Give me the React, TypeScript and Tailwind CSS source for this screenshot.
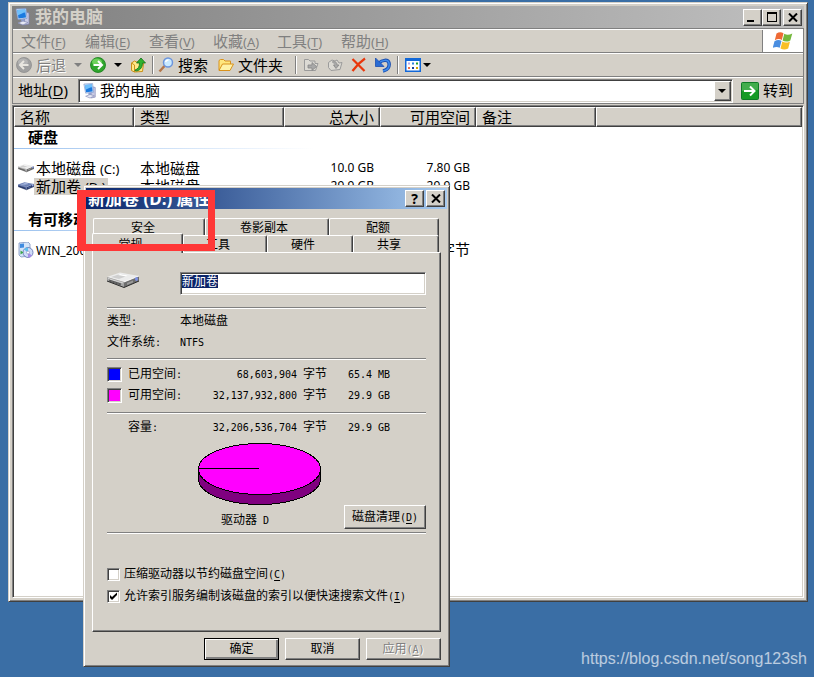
import { useEffect, useRef, type ReactNode } from 'react'
import clsx from 'clsx'

const raised = 'bg-[#d4d0c8] border border-t-white border-l-white border-r-[#404040] border-b-[#404040] shadow-[inset_-1px_-1px_0_#808080]'
const sunken = 'border border-t-[#808080] border-l-[#808080] border-r-white border-b-white shadow-[inset_1px_1px_0_#404040,inset_-1px_-1px_0_#d4d0c8]'
const frame = 'bg-[#d4d0c8] border border-t-[#d4d0c8] border-l-[#d4d0c8] border-r-[#404040] border-b-[#404040] shadow-[inset_1px_1px_0_#fff,inset_-1px_-1px_0_#808080]'
const band = 'border-t border-b border-t-white border-b-[#808080]'

const menus = [
  { label: '文件', hotkey: 'F' },
  { label: '编辑', hotkey: 'E' },
  { label: '查看', hotkey: 'V' },
  { label: '收藏', hotkey: 'A' },
  { label: '工具', hotkey: 'T' },
  { label: '帮助', hotkey: 'H' },
]

function Key({ children, className }: { children: string; className?: string }) {
  return (
    <span className={className}>
      (<u className="underline-offset-2">{children}</u>)
    </span>
  )
}

// Half-width characters of the dialog font
function Half({ children }: { children: ReactNode }) {
  return <span className="font-['DejaVu_Sans_Mono',monospace] text-[10px] whitespace-pre">{children}</span>
}

function ComputerIcon({ className }: { className?: string }) {
  return (
    <svg viewBox="0 0 16 18" className={className} aria-hidden="true">
      <path d="M10 4l4 1v11l-5 1z" fill="#c9cbe4" stroke="#7b80b0" strokeWidth=".7" />
      <path d="M1 1l10-.5 1 10-9 1z" fill="#d8e8fa" stroke="#7a92c8" strokeWidth=".7" />
      <path d="M2.200 2l8-.4.8 8-7.500.8z" fill="#1b7ae0" />
      <path d="M2.200 2l8-.4.3 3c-3 0-5 2-7.700 3z" fill="#6fc0fb" />
      <path d="M6 11l3-.4.5 3-3 .4z" fill="#8fa0d0" />
      <path d="M3 15l5-2 5 1.500-5 2.500z" fill="#e6e8f4" stroke="#8289b4" strokeWidth=".7" />
    </svg>
  )
}

function DriveIcon({ className, dark }: { className?: string; dark?: boolean }) {
  const top = dark ? '#6a7fb4' : '#ececec'
  const side = dark ? '#2b3d72' : '#6e6e6e'
  const front = dark ? '#42568f' : '#a4a4a4'
  return (
    <svg viewBox="0 0 32 16" className={className} aria-hidden="true">
      <path d="M17 10l15-6v5L17 15.500z" fill={side} />
      <path d="M0 5L13 .5 32 4 17 10z" fill={top} />
      <path d="M0 5l17 5v5.500L0 9z" fill={front} />
      <path d="M4 5l9-3 8 1.500-9 3.500z" fill={dark ? '#93a5d0' : '#cfcfcf'} />
      <path d="M13 2l8 1.500-2 1-8-1.500z" fill={dark ? '#b4c1e4' : '#fff'} />
      <path d="M1 6.500l15 4.500" stroke={dark ? '#8a9ccc' : '#e2e2e2'} strokeWidth=".8" fill="none" />
      <path d="M2 8l12 4M2 9l12 4" stroke={dark ? '#1c2c58' : '#484848'} strokeWidth=".8" fill="none" />
      <path d="M17 10l15-6" stroke={dark ? '#a9b6da' : '#fff'} strokeWidth=".8" />
      <path d="M20 11l6-2.500v2L20 13z" fill={dark ? '#5168a4' : '#9a9a9a'} />
      <ellipse cx="29.500" cy="7" rx="1.500" ry="2" fill={dark ? '#9fb3ec' : '#7f92e6'} />
      <path d="M0 9l17 6.500L32 9" stroke={dark ? '#14224a' : '#2c2c2c'} strokeWidth="1" fill="none" />
    </svg>
  )
}

function DiscIcon() {
  return (
    <svg viewBox="0 0 16 16" className="w-4 h-4" aria-hidden="true">
      <path d="M1 1l9-1 2 2v12l-9 1-2-2z" fill="#d4e4f8" stroke="#7d93c0" strokeWidth=".8" />
      <path d="M2 2l4-.5v4L2 6z" fill="#3f8be0" />
      <circle cx="10" cy="10.500" r="5" fill="#cfdcf8" stroke="#5b6fb0" strokeWidth=".8" />
      <path d="M10 10.500L6 7.500a5 5 0 0 1 4-2z" fill="#5fc0ee" />
      <path d="M10 10.500l4 3a5 5 0 0 1-4 2z" fill="#a68be8" />
      <circle cx="10" cy="10.500" r="1.500" fill="#fff" stroke="#7d88b8" strokeWidth=".6" />
      <path d="M2.500 8.500l3 2-3 2z" fill="#3aa54a" />
    </svg>
  )
}

function RoundArrow({ back }: { back?: boolean }) {
  return (
    <svg viewBox="0 0 16 16" className="w-4 h-4 shrink-0" aria-hidden="true">
      <circle cx="8" cy="8" r="7.500" fill={back ? '#a0a0a0' : '#2fa52c'} stroke={back ? '#8e8e8e' : '#187d1b'} strokeWidth=".8" />
      <ellipse cx="7" cy="5" rx="5" ry="3.500" fill={back ? '#b4b4b4' : '#6dd25b'} />
      <path
        d={back ? 'M12.500 8H4.500M8 4L4 8l4 4' : 'M3.500 8h8M8 4l4 4-4 4'}
        stroke={back ? '#e8e6e0' : '#fff'}
        strokeWidth="2"
        fill="none"
      />
    </svg>
  )
}

function FolderIcon() {
  return (
    <svg viewBox="0 0 16 16" className="w-4 h-4 shrink-0" aria-hidden="true">
      <path d="M1 13V3.500L2.500 2.500h3L7 4h5.500v3" fill="#ffe77e" stroke="#d9921c" />
      <path d="M1 13.500L4.500 7H15.500L12 13.500z" fill="#fff3a8" stroke="#d9921c" />
    </svg>
  )
}

function FolderUpIcon() {
  return (
    <svg viewBox="0 0 16 16" className="w-4 h-4 shrink-0" aria-hidden="true">
      <path d="M1.500 6l3-2 2 1 5-1.500 2 3-1 8-8 .5-3-1.500z" fill="#ffe98a" stroke="#c99018" />
      <path d="M1.500 6l3 2v7" fill="none" stroke="#c99018" />
      <path d="M5 13c3-1 4.500-3 4.500-7H6.500L11 1l4.500 5H12.500c0 5-3 8-7 8z" fill="#2fb22f" stroke="#11701a" strokeWidth=".8" />
    </svg>
  )
}

function SearchIcon() {
  return (
    <svg viewBox="0 0 16 16" className="w-4 h-4 shrink-0" aria-hidden="true">
      <path d="M1.500 14.500L6.500 9" stroke="#b4764a" strokeWidth="2.500" />
      <circle cx="10" cy="5.500" r="4.500" fill="#c9e9ff" stroke="#6d95dc" strokeWidth="1.500" />
      <path d="M7.500 5a3 3 0 0 1 3-2" stroke="#fff" strokeWidth="1.500" fill="none" />
    </svg>
  )
}

function MoveIcon({ copy }: { copy?: boolean }) {
  return (
    <svg viewBox="0 0 16 16" className="w-4 h-4 shrink-0" aria-hidden="true">
      {copy ? (
        <path d="M1.500 5.500L5 3l3 1 2-1 2 3 3-.5-2 7-9 1-2.500-3z" fill="#dcdad4" stroke="#9b9b9b" />
      ) : (
        <path d="M1.500 13.500v-11h4L7 4h5v2.500h3l-2.500 7z" fill="#dcdad4" stroke="#9b9b9b" />
      )}
      <path d={copy ? 'M5 5c3-1 5 0 5 3h2L9 11.500 6.500 8H8' : 'M5 8h4V5.500L13.500 9.500 9 13.500V11H5z'} fill="#a8a8a8" stroke="#878787" strokeWidth=".8" />
    </svg>
  )
}

function DeleteIcon() {
  return (
    <svg viewBox="0 0 16 16" className="w-4 h-4 shrink-0" aria-hidden="true">
      <path d="M1.500 2l12 12M14 1.500C9 5 5 9 1.500 14" stroke="#e9370b" strokeWidth="2.200" fill="none" />
    </svg>
  )
}

function UndoIcon() {
  return (
    <svg viewBox="0 0 16 16" className="w-4 h-4 shrink-0" aria-hidden="true">
      <path d="M4 6c3-3 9-4 10 0 .8 4-1.500 7-6 8" stroke="#1b4fb0" strokeWidth="3.500" fill="none" />
      <path d="M4 6c3-3 9-4 10 0 .8 4-1.500 7-6 8" stroke="#3e8cec" strokeWidth="1.500" fill="none" />
      <path d="M.5 1v8.500H9L6.500 7 4 4.500z" fill="#2a6cd4" stroke="#1b4fb0" strokeWidth=".8" />
    </svg>
  )
}

function ViewsIcon() {
  return (
    <svg viewBox="0 0 16 16" className="w-4 h-4 shrink-0" aria-hidden="true">
      <path d="M0 1h16v14H0z" fill="#1268d8" />
      <path d="M1.500 4h13v9.500h-13z" fill="#fff" />
      <path d="M3 5.500h2v2H3z" fill="#b5a7e8" />
      <path d="M7 5.500h2v2H7z" fill="#2c83e0" />
      <path d="M11 5.500h2v2h-2z" fill="#1c9f2c" />
      <path d="M3 10h2v2H3z" fill="#ef7048" />
      <path d="M7 10h2v2H7z" fill="#173d9a" />
      <path d="M11 10h2v2h-2z" fill="#d9a400" />
    </svg>
  )
}

function Caret({ gray }: { gray?: boolean }) {
  return (
    <svg viewBox="0 0 8 4" className="w-2 h-1 shrink-0" aria-hidden="true">
      <path d="M0 0h8L4 4z" fill={gray ? '#808080' : '#000'} />
    </svg>
  )
}

function FlagIcon() {
  return (
    <svg viewBox="0 0 20 20" className="w-5 h-5" aria-hidden="true">
      <path d="M3.500 2.500c2.500-1.800 5-1.600 7-.3L8.800 9C7 7.800 4.500 7.700 1.800 9.200z" fill="#ee6a35" />
      <path d="M11.300 2.800c2.500 1.400 5 1.200 8-.4l-2 7c-2.700 1.500-5.500 1.600-7.700.1z" fill="#74b83c" />
      <path d="M1.500 10.200c2.700-1.500 5.200-1.400 7-.2l-1.800 6.800c-2-1.200-4.400-1.200-7 .2z" fill="#4a8ee0" />
      <path d="M9.300 10.600c2.300 1.400 5 1.300 7.700-.2l-1.800 7c-2.700 1.400-5.300 1.400-7.700 0z" fill="#f8bf26" />
    </svg>
  )
}

function CloseGlyph() {
  return (
    <svg viewBox="0 0 10 9" className="w-[10px] h-[9px]" aria-hidden="true">
      <path d="M1 .5l8 8M9 .5l-8 8" stroke="#000" strokeWidth="2" />
    </svg>
  )
}

function TitleButton({ label, children, className }: { label: string; children: ReactNode; className?: string }) {
  return (
    <button aria-label={label} className={clsx(raised, 'w-[19px] h-[17px] flex items-center justify-center shrink-0', className)}>
      {children}
    </button>
  )
}

function ToolSeparator() {
  return <div className="w-0.5 h-[18px] border-l border-l-[#808080] border-r border-r-white shrink-0" />
}

function GroupRow({ name, first }: { name: string; first?: boolean }) {
  return (
    <tr>
      <th colSpan={6} className={clsx('p-0 pb-[10px] text-left font-bold', !first && 'pt-[14px]')}>
        <div className="h-[21px] pl-[14px] leading-5 text-[15px]">{name}</div>
        <div className="h-px w-[300px] bg-linear-to-r from-[#9cc2ee] to-white" />
      </th>
    </tr>
  )
}

type DriveRowProps = { icon: ReactNode; name: ReactNode; type: ReactNode; size?: ReactNode; free: ReactNode; selected?: boolean }

function DriveRow({ icon, name, type, size, free, selected }: DriveRowProps) {
  return (
    <tr className="h-[18px] leading-4">
      <td className="p-0 pl-1">
        <div className="h-4 flex items-center">
          <span className="w-4 shrink-0">{icon}</span>
          <span className={clsx('px-0.5 whitespace-nowrap', selected && 'bg-[#d4d0c8]')}>{name}</span>
        </div>
      </td>
      <td className="p-0 pl-1.5">{type}</td>
      <td className="p-0 pr-1.5 text-right text-xs leading-4">{size}</td>
      <td className="p-0 pr-1.5 text-right text-xs leading-4">{free}</td>
      <td />
      <td />
    </tr>
  )
}

function Explorer() {
  const head = clsx(raised, 'h-5 px-[5px] py-0 font-normal leading-4')
  return (
    <section className={clsx(frame, 'flex-1 flex flex-col p-[3px] text-[15px]')}>
      {/* Title bar */}
      <header className="h-[22px] pl-[3px] pr-0.5 flex items-center bg-linear-to-r from-[#808080] to-[#c0c0c0]">
        <ComputerIcon className="w-4 h-[18px] mr-1" />
        <h1 className="flex-1 text-[17px] leading-5 font-bold text-[#d4d0c8]">我的电脑</h1>
        <TitleButton label="最小化">
          <span className="w-[7px] h-0.5 mt-2 mr-1 bg-black" />
        </TitleButton>
        <TitleButton label="最大化">
          <span className="w-[10px] h-[10px] border border-t-2 border-black" />
        </TitleButton>
        <TitleButton label="关闭" className="ml-0.5">
          <CloseGlyph />
        </TitleButton>
      </header>

      <div className="border border-t-[#808080] border-b-0 border-l-[#808080] border-r-[#808080]">
        {/* Menu */}
        <div className={clsx(band, 'h-6 flex')}>
          <nav className="flex-1 flex items-center pl-2 leading-5 text-[#808080]">
            {menus.map((m) => (
              <button key={m.hotkey} className="w-16 text-left whitespace-nowrap">
                {m.label}
                <Key className="text-[13px]">{m.hotkey}</Key>
              </button>
            ))}
          </nav>
          <div className="w-[41px] bg-white border-l border-l-[#808080] flex items-center justify-center">
            <FlagIcon />
          </div>
        </div>

        {/* Toolbar */}
        <div className={clsx(band, 'h-6 pl-[3px] flex items-center')}>
          <button className="flex items-center text-[#808080] [text-shadow:1px_1px_0_#fff]">
            <RoundArrow back />
            <span className="ml-1 mr-2">后退</span>
            <Caret gray />
          </button>
          <button aria-label="前进" className="ml-2 flex items-center gap-2">
            <RoundArrow />
            <Caret />
          </button>
          <button aria-label="向上" className="ml-2 mr-1.5">
            <FolderUpIcon />
          </button>
          <ToolSeparator />
          <button className="ml-1 flex items-center gap-1">
            <SearchIcon />
            搜索
          </button>
          <button className="ml-[10px] mr-3 flex items-center gap-1">
            <FolderIcon />
            文件夹
          </button>
          <ToolSeparator />
          <div className="ml-1.5 mr-1.5 flex items-center gap-2">
            <button aria-label="移至"><MoveIcon /></button>
            <button aria-label="复制到"><MoveIcon copy /></button>
            <button aria-label="删除"><DeleteIcon /></button>
            <button aria-label="撤消"><UndoIcon /></button>
          </div>
          <ToolSeparator />
          <button aria-label="查看" className="ml-1.5 flex items-center gap-0.5">
            <ViewsIcon />
            <Caret />
          </button>
        </div>

        {/* Address bar */}
        <div className={clsx(band, 'h-[27px] pl-[5px] pr-[10px] flex items-center')}>
          <label htmlFor="address" className="w-[60px]">
            地址
            <Key>D</Key>
          </label>
          <div className={clsx(sunken, 'flex-1 h-6 p-px pl-1 flex items-center bg-white')}>
            <ComputerIcon className="w-[14px] h-4" />
            <input id="address" defaultValue="我的电脑" className="flex-1 min-w-0 ml-[3px] outline-none" />
            <button aria-label="展开" className={clsx(raised, 'w-[17px] h-5 flex items-center justify-center')}>
              <Caret />
            </button>
          </div>
          <button className="ml-2 flex items-center gap-1">
            <svg viewBox="0 0 18 18" className="w-[18px] h-[18px]" aria-hidden="true">
              <rect x=".5" y=".5" width="17" height="17" rx="1" fill="#169a26" stroke="#0f7a26" />
              <path d="M1 1h16v7C11 7 6 10 1 9z" fill="#42ad4c" />
              <path d="M3 9h10M9 4.500L13.500 9 9 13.500" stroke="#fff" strokeWidth="2" fill="none" />
            </svg>
            转到
          </button>
        </div>
      </div>

      {/* Drives */}
      <div className={clsx(sunken, 'mt-px flex-1 p-px bg-white')}>
        <table className="w-full table-fixed border-separate border-spacing-0">
          <colgroup>
            <col className="w-[120px]" />
            <col className="w-[150px]" />
            <col className="w-[96px]" />
            <col className="w-[96px]" />
            <col className="w-[120px]" />
            <col />
          </colgroup>
          <thead>
            <tr>
              <th className={clsx(head, 'text-left')}>名称</th>
              <th className={clsx(head, 'text-left')}>类型</th>
              <th className={clsx(head, 'text-right')}>总大小</th>
              <th className={clsx(head, 'text-right')}>可用空间</th>
              <th className={clsx(head, 'text-left')}>备注</th>
              <td className={head} />
            </tr>
          </thead>
          <tbody>
            <GroupRow name="硬盘" first />
            <DriveRow
              icon={<DriveIcon className="w-4 h-[10px]" />}
              name={<>本地磁盘 <span className="text-[13px]">(C:)</span></>}
              type="本地磁盘"
              size="10.0 GB"
              free="7.80 GB"
            />
            <DriveRow
              icon={<DriveIcon dark className="w-4 h-[10px]" />}
              name={<>新加卷 <span className="text-[13px]">(D:)</span></>}
              type="本地磁盘"
              size="29.9 GB"
              free="29.9 GB"
              selected
            />
            <GroupRow name="有可移动存储的设备" />
            <DriveRow
              icon={<DiscIcon />}
              name={<span className="text-xs">WIN_2003 (E:)</span>}
              type="CD 驱动器"
              size="588 MB"
              free={<>0 <span className="text-[15px]">字节</span></>}
            />
          </tbody>
        </table>
      </div>
    </section>
  )
}

function Tab({ children, className, active }: { children: string; className?: string; active?: boolean }) {
  return (
    <button
      role="tab"
      aria-selected={active ? true : false}
      className={clsx(
        'bg-[#d4d0c8] border border-b-0 border-t-white border-l-white border-r-[#404040] shadow-[inset_-1px_0_0_#808080] rounded-t-[2px] text-center leading-[14px]',
        className,
      )}
    >
      {children}
    </button>
  )
}

function Rule({ className }: { className?: string }) {
  return <hr className={clsx('h-0.5 border-t border-b border-t-[#808080] border-b-white', className)} />
}

function Swatch({ className }: { className: string }) {
  return <div className={clsx(sunken, 'w-[15px] h-[15px]', className)} />
}

function UsageRow({ swatch, label, bytes, size }: { swatch?: ReactNode; label: string; bytes: string; size: string }) {
  return (
    <tr className="h-[21px]">
      <td className="p-0 w-[21px]">{swatch}</td>
      <th className="p-0 w-[60px] text-left font-normal">
        {label}
        <Half>:</Half>
      </th>
      <td className="p-0 w-[139px] text-right">
        <Half>{bytes} </Half>字节
      </td>
      <td className="p-0 pl-[21px] text-left">
        <Half>{size}</Half>
      </td>
    </tr>
  )
}

function PieChart() {
  return (
    <svg viewBox="0 0 123 62" className="ml-[91px] w-[123px] h-[62px]" aria-hidden="true" shapeRendering="crispEdges">
      <path d="M.5 26v10a61 25.500 0 0 0 122 0V26z" fill="#800080" stroke="#000" />
      <ellipse cx="61.500" cy="26" rx="61" ry="25.500" fill="#f0f" stroke="#000" />
      <path d="M0 25.500h61" stroke="#000" />
    </svg>
  )
}

function CheckRow({ id, label, hotkey, checked }: { id: string; label: string; hotkey: string; checked?: boolean }) {
  return (
    <div className="h-[22px] flex items-center">
      <div className="relative w-[13px] h-[13px]">
        <input id={id} type="checkbox" defaultChecked={checked} className={clsx(sunken, 'peer block appearance-none w-[13px] h-[13px] bg-white')} />
        <svg viewBox="0 0 13 13" className="absolute inset-0 hidden peer-checked:block pointer-events-none" aria-hidden="true">
          <path d="M3 5v3l2 2 5-5V2.500L5 7z" fill="#000" />
        </svg>
      </div>
      <label htmlFor={id} className="ml-1 whitespace-nowrap">
        {label}
        <Key className="font-['DejaVu_Sans_Mono',monospace] text-[10px]">{hotkey}</Key>
      </label>
    </div>
  )
}

function Properties() {
  const volume = useRef<HTMLInputElement>(null)

  useEffect(() => {
    volume.current?.focus()
    volume.current?.select()
  }, [])

  const button = clsx(raised, 'h-[22px] w-[75px]')
  const mono = "font-['DejaVu_Sans_Mono',monospace] text-[10px]"

  return (
    <section className={clsx(frame, 'absolute isolate left-[83px] top-[185px] w-[367px] p-0.5 text-xs leading-4')}>
      <header className="h-[21px] pr-0.5 flex items-center bg-linear-to-r from-[#0a246a] to-[#a6caf0]">
        <h2 className="flex-1 pl-0.5 text-[17px] leading-5 font-bold text-white">新加卷 (D:) 属性</h2>
        <TitleButton label="帮助">
          <span className="text-sm leading-none font-bold">?</span>
        </TitleButton>
        <TitleButton label="关闭" className="ml-0.5">
          <CloseGlyph />
        </TitleButton>
      </header>

      <div className="mx-1.5 mt-[9px]">
        {/* Tabs */}
        <div role="tablist">
          <div className="ml-px h-4 flex">
            <Tab className="w-[112px] h-[18px] pr-3">安全</Tab>
            <Tab className="w-[124px] h-[18px] pr-1.5">卷影副本</Tab>
            <Tab className="w-[110px] h-[18px] pr-3">配额</Tab>
          </div>
          <div className="relative h-[18px] flex items-end">
            <Tab active className="relative z-10 -mb-px w-[91px] h-5 pt-0.5 pr-[14px]">常规</Tab>
            <Tab className="w-[84px] h-[17px] pt-0.5 pr-[14px]">工具</Tab>
            <Tab className="w-[86px] h-[17px] pt-0.5 pr-[14px]">硬件</Tab>
            <Tab className="w-[86px] h-[17px] pt-0.5 pr-[14px]">共享</Tab>
          </div>
        </div>

        {/* General page */}
        <div className={clsx(raised, 'pl-[14px] pr-[14px] pt-[19px] pb-6')}>
          <div className="h-[23px] flex">
            <DriveIcon className="w-8 h-4 mr-[41px]" />
            <input
              ref={volume}
              aria-label="卷标"
              defaultValue="新加卷"
              className={clsx(sunken, 'flex-1 min-w-0 px-px pb-1 bg-white outline-none caret-transparent leading-[13px] selection:bg-[#0a246a] selection:text-white')}
            />
          </div>
          <Rule className="mt-3" />
          <dl className="mt-0.5 grid grid-cols-[73px_1fr] auto-rows-[21px] leading-5">
            <dt>类型<Half>:</Half></dt>
            <dd>本地磁盘</dd>
            <dt>文件系统<Half>:</Half></dt>
            <dd><Half>NTFS</Half></dd>
          </dl>
          <Rule className="mt-[5px]" />
          <table className="mt-1 w-full table-fixed">
            <tbody>
              <UsageRow swatch={<Swatch className="bg-[#0000ff]" />} label="已用空间" bytes="68,603,904" size="65.4 MB" />
              <UsageRow swatch={<Swatch className="bg-[#ff00ff]" />} label="可用空间" bytes="32,137,932,800" size="29.9 GB" />
            </tbody>
          </table>
          <Rule className="mt-1.5" />
          <table className="mt-[3px] w-full table-fixed">
            <tbody>
              <UsageRow label="容量" bytes="32,206,536,704" size="29.9 GB" />
            </tbody>
          </table>
          <div className="mt-[5px]">
            <PieChart />
          </div>
          <div className="h-6 flex items-end justify-between">
            <span className="pl-[114px]">
              驱动器<Half> D</Half>
            </span>
            <button className={clsx(raised, 'w-[82px] h-6')}>
              磁盘清理<Key className={mono}>D</Key>
            </button>
          </div>
          <Rule className="mt-[3px] mb-[29px]" />
          <CheckRow id="compress" label="压缩驱动器以节约磁盘空间" hotkey="C" />
          <CheckRow id="index" label="允许索引服务编制该磁盘的索引以便快速搜索文件" hotkey="I" checked />
        </div>

        <div className="mt-1.5 mb-1 flex justify-end gap-1.5">
          <button className={clsx(raised, 'h-[22px] w-[75px] outline outline-black -outline-offset-1 shadow-[inset_1px_1px_0_#fff,inset_-2px_-2px_0_#808080]')}>
            确定
          </button>
          <button className={button}>取消</button>
          <button disabled className={clsx(button, 'text-[#808080] [text-shadow:1px_1px_0_#fff]')}>
            应用<Key className={mono}>A</Key>
          </button>
        </div>
      </div>
    </section>
  )
}

export default function App() {
  return (
    <main className="relative min-h-screen flex flex-col pt-0.5 pl-2 pr-1.5 pb-[75px] bg-[#3a6ea5] border-r-2 border-white text-black font-['Noto_Sans','Noto_Sans_CJK_SC',sans-serif]">
      <Explorer />
      <Properties />
      {/* Highlight over the security tab */}
      <div className="absolute left-[77px] top-[190px] w-[138px] h-[61px] border-7 border-l-9 border-[#ff3737] pointer-events-none" />
      <a
        href="https://blog.csdn.net/song123sh"
        className="absolute right-[7px] bottom-1.5 font-['Liberation_Sans',sans-serif] text-base text-white/65"
      >
        https://blog.csdn.net/song123sh
      </a>
    </main>
  )
}
